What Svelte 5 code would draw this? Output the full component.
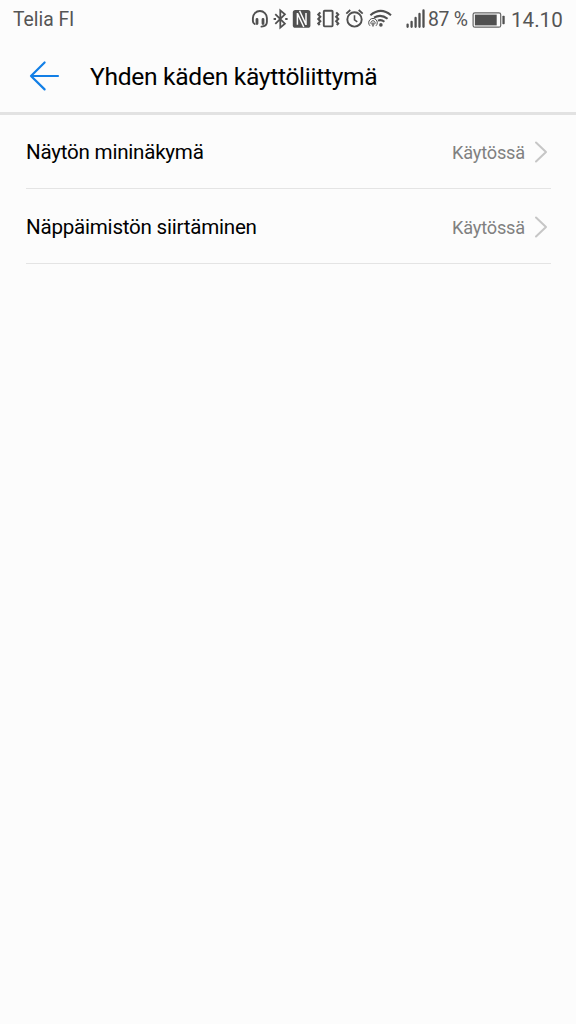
<script lang="ts">
  interface Setting {
    label: string;
    value: string;
  }

  const settings: Setting[] = [
    { label: 'Näytön mininäkymä', value: 'Käytössä' },
    { label: 'Näppäimistön siirtäminen', value: 'Käytössä' }
  ];
</script>

<div class="screen">
  <div class="status-bar">
    <span class="carrier">Telia FI</span>

    <!-- headset, bluetooth, nfc, vibrate, alarm, wifi, signal -->
    <svg class="indicators" width="178" height="38" viewBox="250 0 178 38" fill="none" stroke="#505050">
      <path d="M254.6 24q-1.7-.8-1.7-3v-3a7 7 0 0 1 14 0v4q0 4.2-5.4 4.6" stroke-width="1.9" stroke-linecap="round" />
      <path d="M257 19.4v4.2M263 19.4v4.2" stroke-width="2.8" stroke-linecap="round" />

      <path d="M275.3 14.2l9.6 9.4-4.6 4V10.4l4.6 4-9.6 9.4" stroke-width="1.8" />
      <path d="M273.6 19h2.4M285.2 19h2.4" stroke-width="2.2" />

      <rect x="292.8" y="10" width="17.6" height="17.8" rx="2.6" fill="#505050" stroke="none" />
      <path d="M297.4 24.8V13M297.4 13.4l6.4 13.6M306 13v12M306 24.6l-6.4-13.8" stroke="#fcfcfc" stroke-width="1.5" />

      <rect x="323.8" y="10.8" width="8.8" height="15.6" rx="0.8" stroke-width="1.9" />
      <path d="M320.3 12.4l-2 2.2 2 2.2-2 2.2 2 2.2-2 2.2 1.4 1.6M336.2 12.4l2 2.2-2 2.2 2 2.2-2 2.2 2 2.2-1.4 1.6" stroke-width="2.1" />

      <circle cx="354.5" cy="19.4" r="7.2" stroke-width="1.9" />
      <path d="M354.5 15.2v4.6l2.8 2" stroke-width="1.6" />
      <path d="M346.3 13.6l4-3.6M362.7 13.6l-4-3.6" stroke-width="1.9" />

      <path d="M370.4 15.2q10.4-8.6 20.6 0M374 17.6q7-4 13.6 1.2M378 20.6q3.2-1.4 6.4 1.2" stroke-width="2.1" />
      <circle cx="380.9" cy="24.9" r="1.8" fill="#505050" stroke="none" />
      <path d="M370 25.8a4.3 4.3 0 1 1 6 0M371.6 24.4a2.1 2.1 0 1 1 2.8 0" stroke-width="1" />
      <path d="M373 22.6v4" stroke-width="1.4" />

      <path d="M407.6 24.6v2.2M411.6 21.8v5M415.6 18v8.8M419.5 14v12.8M423.5 10.4v16.4" stroke-width="2.3" stroke-linecap="round" />
    </svg>

    <span class="percent">87 %</span>

    <svg class="battery" width="34" height="16" viewBox="0 0 34 16">
      <rect x="1.1" y="0.8" width="27.6" height="14.4" rx="1.8" fill="none" stroke="#666" stroke-width="1.2" />
      <rect x="2.9" y="2.6" width="21.8" height="10.8" fill="#505050" />
      <rect x="30.4" y="3.8" width="2.3" height="8.4" rx="0.7" fill="#505050" />
    </svg>

    <span class="clock">14.10</span>
  </div>

  <header class="header">
    <button class="back" type="button" aria-label="Takaisin">
      <svg width="32" height="32" viewBox="0 0 32 32" fill="none" stroke="#127fe6" stroke-width="2.2" stroke-linecap="round" stroke-linejoin="round">
        <path d="M30 16H3M16.6 2.5L3 16l13.6 13.4" />
      </svg>
    </button>
    <h1 class="title">Yhden käden käyttöliittymä</h1>
  </header>

  <ul class="settings">
    {#each settings as setting}
      <li class="row">
        <span class="label">{setting.label}</span>
        <span class="value">{setting.value}</span>
        <svg class="chevron" width="14" height="22" viewBox="0 0 14 22" fill="none" stroke="#c6c6c6" stroke-width="2" stroke-linecap="round" stroke-linejoin="round">
          <path d="M2 1.5L12 11 2 20.5" />
        </svg>
      </li>
    {/each}
  </ul>
</div>

<style>
  :global(body) {
    background: #fcfcfc;
  }

  .screen {
    min-height: 1024px;
    background: #fcfcfc;
    font-family: Roboto, 'Liberation Sans', sans-serif;
    color: #000;
  }

  .status-bar {
    display: flex;
    align-items: center;
    height: 38px;
    padding: 0 13px;
    color: #555;
    line-height: 38px;
    white-space: nowrap;
  }

  .carrier {
    width: 237px;
    padding-top: 1px;
    font-size: 19.3px;
  }

  .indicators {
    flex: none;
  }

  .percent {
    width: 44px;
    padding-top: 2px;
    font-size: 19.4px;
    letter-spacing: -0.3px;
  }

  .battery {
    flex: none;
    margin-top: 1px;
  }

  .clock {
    margin-left: 5px;
    padding-top: 1px;
    font-size: 20.6px;
  }

  .header {
    display: flex;
    align-items: center;
    box-sizing: border-box;
    height: 76.5px;
    padding-left: 28px;
    border-bottom: 3px solid #e2e2e2;
  }

  .back {
    display: flex;
    width: 32px;
    margin: 2px 30px 0 0;
    padding: 0;
    border: none;
    background: none;
  }

  .title {
    margin: 5px 0 0;
    font-size: 24.6px;
    font-weight: 400;
    line-height: 32px;
    letter-spacing: -0.3px;
    white-space: nowrap;
  }

  .settings {
    margin: 0;
    padding: 0 25px 0 26px;
    list-style: none;
  }

  .row {
    display: flex;
    align-items: center;
    box-sizing: border-box;
    height: 74.8px;
    padding-top: 2px;
    border-bottom: 1px solid #e4e4e4;
  }

  .label {
    flex: 1;
    font-size: 20.6px;
    letter-spacing: -0.24px;
  }

  .value {
    color: #808080;
    font-size: 18.2px;
    letter-spacing: -0.2px;
  }

  .chevron {
    margin: 0 3px 0 9px;
  }
</style>
